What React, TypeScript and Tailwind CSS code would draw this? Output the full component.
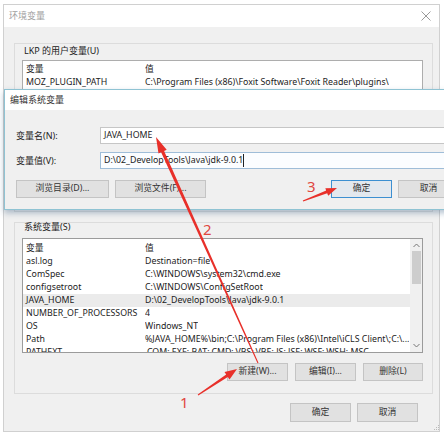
import { FC } from "react";

const font = "font-['Noto_Sans','Noto_Sans_CJK_SC',sans-serif]";

const sysVars = [
  ["asl.log", "Destination=file"],
  ["ComSpec", "C:\\WINDOWS\\system32\\cmd.exe"],
  ["configsetroot", "C:\\WINDOWS\\ConfigSetRoot"],
  ["JAVA_HOME", "D:\\02_DevelopTools\\Java\\jdk-9.0.1"],
  ["NUMBER_OF_PROCESSORS", "4"],
  ["OS", "Windows_NT"],
  ["Path", "%JAVA_HOME%\\bin;C:\\Program Files (x86)\\Intel\\iCLS Client\\;C:\\..."],
  ["PATHEXT", ".COM;.EXE;.BAT;.CMD;.VBS;.VBE;.JS;.JSE;.WSF;.WSH;.MSC"],
];

const Btn: FC<{ label: string; w: string; blue?: boolean }> = ({ label, w, blue }) => (
  <div
    className={`${w} h-[18px] flex items-center justify-center text-[#333] border ${
      blue ? "border-[#3c8fd1] bg-[#e3e8ee]" : "border-[#c4c4c4] bg-[#e1e1e1]"
    }`}
  >
    {label}
  </div>
);

const Row: FC<{ name: string; value: string; selected?: boolean }> = ({ name, value, selected }) => (
  <div className={`flex h-[13px] leading-[13px] pl-[3px] whitespace-nowrap ${selected ? "bg-[#ebebeb]" : ""}`}>
    <div className="w-[119px] shrink-0">{name}</div>
    <div className="overflow-hidden">{value}</div>
  </div>
);

const Chevron: FC<{ up?: boolean }> = ({ up }) => (
  <svg width="7" height="5" viewBox="0 0 7 5">
    <path d={up ? "M0.5 4 L3.5 1 L6.5 4" : "M0.5 1 L3.5 4 L6.5 1"} fill="none" stroke="#777" strokeWidth="1" />
  </svg>
);

const App: FC = () => {
  return (
    <div className={`relative w-[444px] h-[440px] bg-white overflow-hidden text-[8.8px] text-[#222] ${font}`}>
      {/* background window: 环境变量 */}
      <div className="ml-[3px] mt-[4px] w-[437px] h-[428px] border border-[#d0d0d0] bg-[#f0f0f0] flex flex-col">
        <div className="h-[22px] bg-white flex items-center justify-between pl-[5px] pr-[8px] text-[#a0a0a0] text-[9px]">
          <span>环境变量</span>
          <svg width="10" height="10" viewBox="0 0 10 10">
            <path d="M0.5 0.5 L9.5 9.5 M9.5 0.5 L0.5 9.5" stroke="#9a9a9a" strokeWidth="1" />
          </svg>
        </div>

        <div className="pl-[10px] pt-[16px] flex flex-col">
          {/* user variables */}
          <div className="w-[419px] h-[169px] border border-[#dcdcdc] pl-[7px] flex flex-col">
            <div className="h-[16px] leading-[16px] pl-[2px] mt-[-1px] text-[9px]">LKP 的用户变量(U)</div>
            <div className="mt-[1px] w-[401px] h-[100px] border border-[#adadad] bg-white pt-[2px]">
              <Row name="变量" value="值" />
              <Row name="MOZ_PLUGIN_PATH" value="C:\Program Files (x86)\Foxit Software\Foxit Reader\plugins\" />
            </div>
          </div>

          {/* system variables */}
          <div className="mt-[10px] w-[419px] h-[172px] border border-[#dcdcdc] pl-[7px] flex flex-col">
            <div className="h-[14px] leading-[14px] pl-[2px] -mt-[3px] text-[9px]">系统变量(S)</div>
            <div className="mt-[4px] w-[401px] h-[115px] border border-[#9b9b9b] bg-white flex">
              <div className="flex-1 pt-[3px] overflow-hidden">
                <Row name="变量" value="值" />
                {sysVars.map(([n, v]) => (
                  <Row key={n} name={n} value={v} selected={n === "JAVA_HOME"} />
                ))}
              </div>
              <div className="w-[12px] bg-[#f0f0f0] flex flex-col items-center">
                <div className="h-[12px] flex items-center">
                  <Chevron up />
                </div>
                <div className="w-[9px] h-[33px] bg-[#cdcdcd]" />
                <div className="flex-1" />
                <div className="h-[14px] flex items-center">
                  <Chevron />
                </div>
              </div>
            </div>
            <div className="mt-[10px] flex gap-[7px] pl-[205px]">
              <Btn label="新建(W)..." w="w-[61px]" />
              <Btn label="编辑(I)..." w="w-[61px]" />
              <Btn label="删除(L)" w="w-[60px]" />
            </div>
          </div>

          <div className="mt-[9px] flex gap-[6px] pl-[276px]">
            <div className="w-[61px] h-[19px] flex items-center justify-center bg-[#e1e1e1] border border-[#c4c4c4] text-[#333]">确定</div>
            <div className="w-[61px] h-[19px] flex items-center justify-center bg-[#e1e1e1] border border-[#c4c4c4] text-[#333]">取消</div>
          </div>
        </div>
      </div>

      {/* resize grip */}
      <svg className="absolute left-[432px] top-[423px]" width="8" height="8" viewBox="0 0 8 8">
        <rect x="6" y="2" width="1" height="1" fill="#bbb" />
        <rect x="4" y="4" width="1" height="1" fill="#bbb" />
        <rect x="6" y="4" width="1" height="1" fill="#bbb" />
        <rect x="2" y="6" width="1" height="1" fill="#bbb" />
        <rect x="4" y="6" width="1" height="1" fill="#bbb" />
        <rect x="6" y="6" width="1" height="1" fill="#bbb" />
      </svg>

      {/* edit dialog: 编辑系统变量 */}
      <div className="absolute left-[4px] top-[89px] w-[470px] h-[121px] border border-[#8fc3d3] bg-[#f0f0f0] shadow-[0_3px_6px_rgba(40,80,120,0.35)] flex flex-col">
        <div className="h-[20px] bg-white flex items-center pl-[5px] text-[#333] text-[9px]">编辑系统变量</div>
        <div className="pl-[11px] pt-[17px] flex flex-col">
          <div className="flex items-center h-[17px]">
            <div className="w-[84px] text-[9px]">变量名(N):</div>
            <div className="flex-1 h-[17px] bg-white border border-[#c6c6c6] pl-[3px] leading-[15px]">JAVA_HOME</div>
          </div>
          <div className="flex items-center h-[17px] mt-[8px]">
            <div className="w-[84px] text-[9px]">变量值(V):</div>
            <div className="flex-1 h-[17px] bg-[#fbfdff] border border-[#9fbdd8] pl-[3px] leading-[15px] flex">
              <span>D:\02_DevelopTools\Java\jdk-9.0.1</span>
              <span className="w-px h-[13px] mt-[1px] bg-[#222]" />
            </div>
          </div>
          <div className="flex mt-[11px]">
            <Btn label="浏览目录(D)..." w="w-[93px]" />
            <div className="ml-[6px]">
              <Btn label="浏览文件(F)..." w="w-[91px]" />
            </div>
            <div className="ml-[125px]">
              <Btn label="确定" w="w-[61px]" blue />
            </div>
            <div className="ml-[6px]">
              <Btn label="取消" w="w-[61px]" />
            </div>
          </div>
        </div>
      </div>

      {/* annotation arrows */}
      <svg className="absolute left-0 top-0 pointer-events-none" width="444" height="440" viewBox="0 0 444 440">
        <polygon
          fill="#e8302a"
          points="156,137 166.7,149.7 164.1,151 258.5,362.8 257.5,363.2 161.1,152.3 158.5,153.4"
        />
        <polygon
          fill="#e8302a"
          points="237,369 229.5,379.4 227.8,376.9 198.3,395.5 197.7,394.5 226.2,374.4 224.5,371.9"
        />
        <polygon
          fill="#e8302a"
          points="337,188 328.2,195.7 327.2,193.2 303.2,201.6 302.8,200.4 326.2,190.6 325.3,188.2"
        />
      </svg>
      <span className="absolute left-[180px] top-[393px] text-[15px] leading-[18px] text-[#e0473f]">1</span>
      <span className="absolute left-[203px] top-[220px] text-[15px] leading-[18px] text-[#e0473f]">2</span>
      <span className="absolute left-[307px] top-[177px] text-[15px] leading-[18px] text-[#e0473f]">3</span>
    </div>
  );
};

export default App;
